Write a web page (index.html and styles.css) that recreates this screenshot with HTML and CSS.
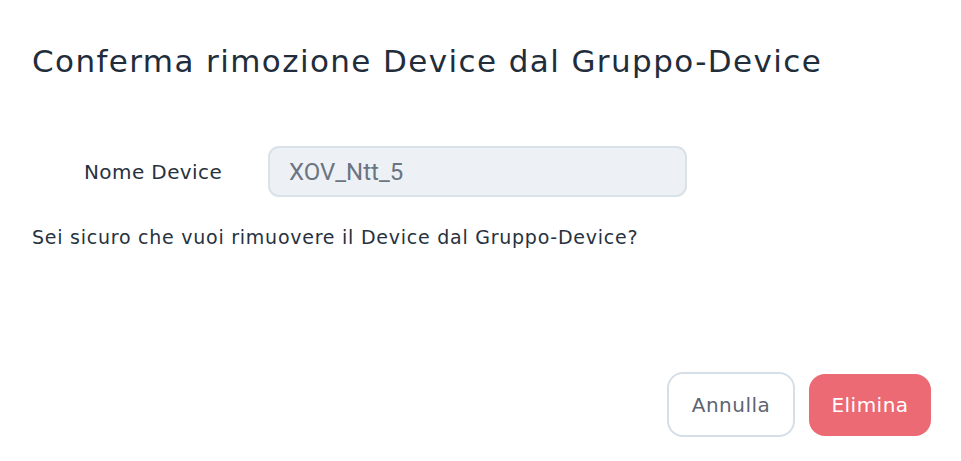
FILE: index.html
```html
<!DOCTYPE html>
<html lang="it">
<head>
<meta charset="utf-8">
<link rel="stylesheet" href="styles.css">
</head>
<body>
<div class="dialog">
  <h1 class="title">Conferma rimozione Device dal Gruppo-Device</h1>
  <div class="field">
    <label class="label">Nome Device</label>
    <div class="input">XOV_Ntt_5</div>
  </div>
  <p class="message">Sei sicuro che vuoi rimuovere il Device dal Gruppo-Device?</p>
  <div class="actions">
    <button class="btn btn-cancel">Annulla</button>
    <button class="btn btn-delete">Elimina</button>
  </div>
</div>
</body>
</html>
```
FILE: styles.css
```css
html, body {
  margin: 0;
  padding: 0;
  background: #ffffff;
}
.dialog {
  width: 961px;
  height: 461px;
  box-sizing: border-box;
  padding: 39px 30px 0 32px;
  display: flex;
  flex-direction: column;
  font-family: "DejaVu Sans", sans-serif;
}
.title {
  margin: 0;
  font-size: 31px;
  font-weight: normal;
  line-height: 44px;
  color: #222d3b;
  letter-spacing: 1.4px;
}
.field {
  display: flex;
  align-items: center;
  margin-top: 63px;
}
.label {
  width: 236px;
  box-sizing: border-box;
  padding-left: 52px;
  font-size: 20px;
  letter-spacing: 0.4px;
  color: #273240;
}
.input {
  width: 419px;
  height: 51px;
  box-sizing: border-box;
  border: 2px solid #d9e1e9;
  border-radius: 11px;
  background: #edf1f6;
  display: flex;
  align-items: center;
  padding-left: 19px;
  font-family: Roboto, sans-serif;
  font-size: 24px;
  color: #6b7480;
}
.message {
  margin: 28px 0 0 0;
  font-size: 19px;
  line-height: 24px;
  letter-spacing: 0.75px;
  color: #273240;
}
.actions {
  display: flex;
  justify-content: flex-end;
  align-items: center;
  gap: 14px;
  margin-top: 123px;
}
.btn {
  font-family: "DejaVu Sans", sans-serif;
  font-size: 20px;
  letter-spacing: 0.5px;
  border-radius: 16px;
  cursor: pointer;
  padding: 0;
}
.btn-cancel {
  width: 128px;
  height: 65px;
  background: #ffffff;
  border: 2px solid #d6dee7;
  color: #5c6572;
}
.btn-delete {
  width: 122px;
  height: 62px;
  background: #ec6a74;
  border: none;
  color: #ffffff;
}
```
